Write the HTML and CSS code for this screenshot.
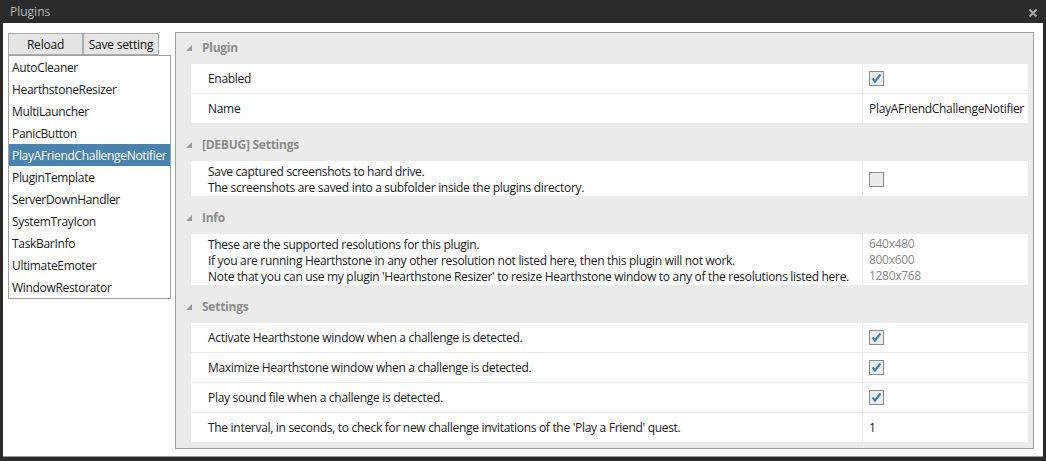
FILE: index.html
```html
<!DOCTYPE html>
<html>
<head>
<meta charset="utf-8">
<link rel="stylesheet" href="styles.css">
</head>
<body>
<div class="window">
  <div class="titlebar">
    <span class="title">Plugins</span>
    <svg class="close" width="10" height="10" viewBox="0 0 10 10"><path d="M1.5 1.5 L8.5 8.5 M8.5 1.5 L1.5 8.5" stroke="#a8a8a8" stroke-width="2"/></svg>
  </div>
  <div class="content">
    <div class="sidebar">
      <div class="buttons">
        <button class="btn btn-reload">Reload</button>
        <button class="btn btn-save">Save setting</button>
      </div>
      <ul class="list">
        <li>AutoCleaner</li>
        <li>HearthstoneResizer</li>
        <li>MultiLauncher</li>
        <li>PanicButton</li>
        <li class="selected">PlayAFriendChallengeNotifier</li>
        <li>PluginTemplate</li>
        <li>ServerDownHandler</li>
        <li>SystemTrayIcon</li>
        <li>TaskBarInfo</li>
        <li>UltimateEmoter</li>
        <li>WindowRestorator</li>
      </ul>
    </div>
    <div class="grid">
      <section class="cat">
        <div class="cat-head"><span class="tri"></span>Plugin</div>
        <div class="row"><div class="name">Enabled</div><div class="val"><span class="cb checked"><svg width="13" height="13" viewBox="0 0 13 13"><path d="M2.5 6.5 L5 9.5 L10.5 2.5" stroke="#3f7fb3" stroke-width="2.2" fill="none"/></svg></span></div></div>
        <div class="row"><div class="name">Name</div><div class="val">PlayAFriendChallengeNotifier</div></div>
      </section>
      <section class="cat">
        <div class="cat-head"><span class="tri"></span>[DEBUG] Settings</div>
        <div class="row multi r2"><div class="name">Save captured screenshots to hard drive.<br>The screenshots are saved into a subfolder inside the plugins directory.</div><div class="val"><span class="cb"></span></div></div>
      </section>
      <section class="cat">
        <div class="cat-head"><span class="tri"></span>Info</div>
        <div class="row multi r3"><div class="name">These are the supported resolutions for this plugin.<br>If you are running Hearthstone in any other resolution not listed here, then this plugin will not work.<br>Note that you can use my plugin 'Hearthstone Resizer' to resize Hearthstone window to any of the resolutions listed here.</div><div class="val muted">640x480<br>800x600<br>1280x768</div></div>
      </section>
      <section class="cat">
        <div class="cat-head"><span class="tri"></span>Settings</div>
        <div class="row"><div class="name">Activate Hearthstone window when a challenge is detected.</div><div class="val"><span class="cb checked"><svg width="13" height="13" viewBox="0 0 13 13"><path d="M2.5 6.5 L5 9.5 L10.5 2.5" stroke="#3f7fb3" stroke-width="2.2" fill="none"/></svg></span></div></div>
        <div class="row"><div class="name">Maximize Hearthstone window when a challenge is detected.</div><div class="val"><span class="cb checked"><svg width="13" height="13" viewBox="0 0 13 13"><path d="M2.5 6.5 L5 9.5 L10.5 2.5" stroke="#3f7fb3" stroke-width="2.2" fill="none"/></svg></span></div></div>
        <div class="row"><div class="name">Play sound file when a challenge is detected.</div><div class="val"><span class="cb checked"><svg width="13" height="13" viewBox="0 0 13 13"><path d="M2.5 6.5 L5 9.5 L10.5 2.5" stroke="#3f7fb3" stroke-width="2.2" fill="none"/></svg></span></div></div>
        <div class="row"><div class="name">The interval, in seconds, to check for new challenge invitations of the 'Play a Friend' quest.</div><div class="val">1</div></div>
      </section>
    </div>
  </div>
</div>
</body>
</html>
```

FILE: styles.css
```css
* { box-sizing: border-box; }
html, body {
  margin: 0;
  padding: 0;
  background: #2b2b2b;
  width: 1046px;
  height: 461px;
  overflow: hidden;
  font-family: "Open Sans", "Noto Sans", sans-serif;
  font-size: 12px;
  color: #1a1a1a;
}
.window {
  display: flex;
  flex-direction: column;
  height: 461px;
  padding: 0 3px 4px 3px;
}
.titlebar {
  height: 23px;
  display: flex;
  align-items: center;
  justify-content: space-between;
  padding: 0 5px 0 7px;
}
.title {
  color: #b8b8b8;
  font-size: 12px;
}
.close { display: block; margin-top: 2px; }
.content {
  flex: 1;
  background: #fff;
  display: flex;
  gap: 4px;
  padding: 9px 9px 0 5px;
  border-bottom: 1px solid #9a9a9a;
}
.sidebar {
  width: 163px;
  margin-top: 1px;
  display: flex;
  flex-direction: column;
}
.buttons { display: flex; }
.btn {
  height: 22px;
  margin: 0;
  background: #e5e5e5;
  border: 1px solid #acacac;
  font-family: inherit;
  font-size: 12px;
  color: #111;
  padding: 1px 0 0 0;
  line-height: 19px;
  letter-spacing: -0.2px;
}
.btn-reload { width: 75px; }
.btn-save { width: 76px; }
.list {
  list-style: none;
  margin: 0;
  padding: 0;
  border: 1px solid #a0a0a0;
  width: 163px;
}
.list li {
  height: 22px;
  line-height: 20px;
  padding-top: 2px;
  padding-left: 3px;
  white-space: nowrap;
  letter-spacing: -0.32px;
}
.list li.selected {
  background: #4a83ad;
  color: #fff;
}
.grid {
  width: 859px;
  height: 417px;
  background: #ebebeb;
  border: 1px solid #a0a0a0;
  padding: 0 5px 0 15px;
}
.cat + .cat { margin-top: 6px; }
.cat-head {
  height: 31px;
  display: flex;
  align-items: center;
  padding-bottom: 2px;
  font-weight: bold;
  color: #8c8c8c;
  margin-left: -15px;
  padding-left: 10px;
  letter-spacing: -0.25px;
}
.tri {
  width: 0;
  height: 0;
  border-left: 6px solid transparent;
  border-bottom: 6px solid #9a9a9a;
  margin-right: 10px;
  margin-top: 1px;
}
.row {
  display: flex;
  height: 30px;
  background: #fff;
  border-bottom: 1px solid #ebebeb;
}
.row.r2 { height: 36px; }
.row.r3 { height: 52px; }
.name {
  flex: 1;
  display: flex;
  align-items: center;
  padding-left: 17px;
  letter-spacing: -0.3px;
  white-space: nowrap;
}
.val {
  width: 166px;
  border-left: 1px solid #ebebeb;
  display: flex;
  align-items: center;
  padding-left: 6px;
  letter-spacing: -0.3px;
  white-space: nowrap;
}
.multi .name {
  line-height: 16px;
  align-items: flex-start;
  padding-top: 3px;
}
.multi .val { line-height: 16px; align-items: center; padding-top: 1px; }
.muted { color: #8a8a8a; }
.cb {
  width: 15px;
  height: 15px;
  border: 1px solid #8a8a8a;
  background: #ececec;
  display: flex;
  align-items: center;
  justify-content: center;
}
.cb svg { display: block; }
```
